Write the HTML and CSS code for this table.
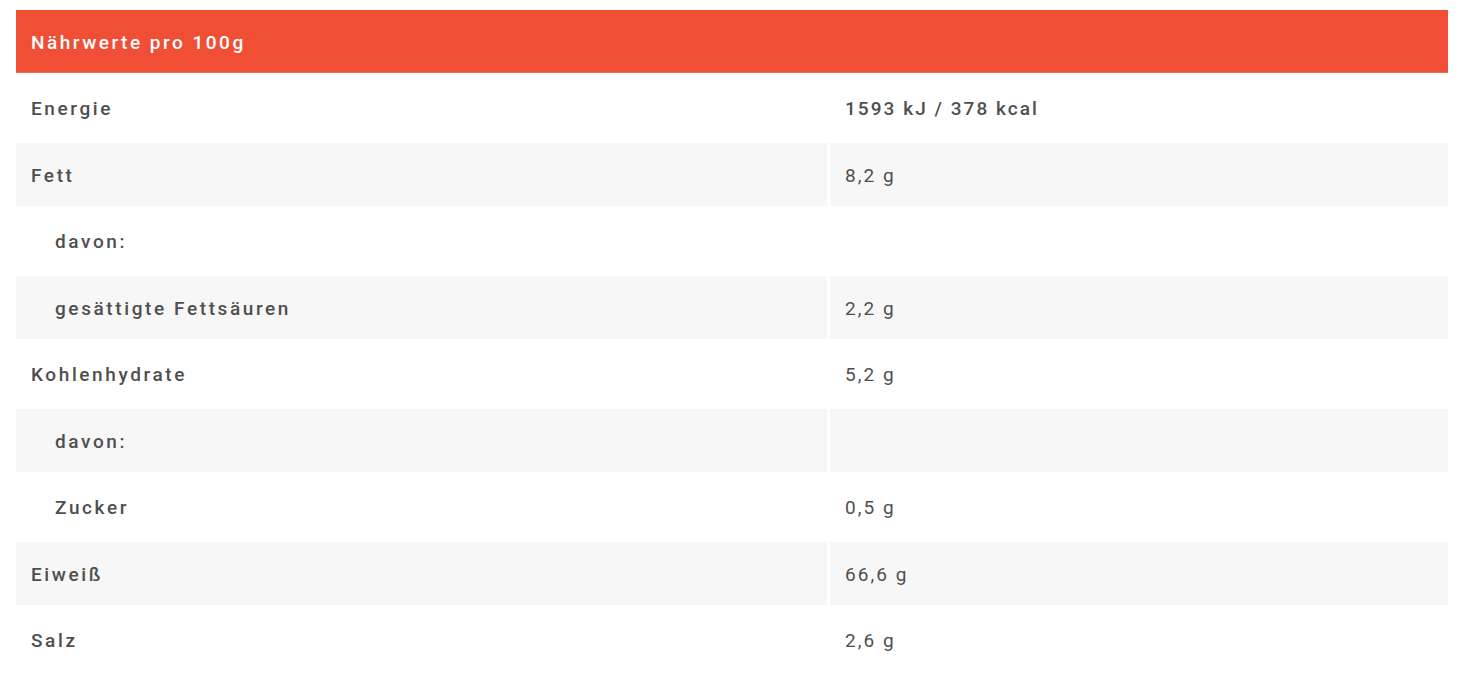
FILE: index.html
```html
<!DOCTYPE html>
<html lang="de">
<head>
<meta charset="utf-8">
<title>Nährwerte</title>
<link rel="stylesheet" href="styles.css">
</head>
<body>
<table class="nutrition">
  <colgroup>
    <col class="col-label">
    <col class="col-value">
  </colgroup>
  <thead>
    <tr><th colspan="2" class="head">Nährwerte pro 100g</th></tr>
  </thead>
  <tbody>
    <tr class="strong"><td>Energie</td><td>1593 kJ / 378 kcal</td></tr>
    <tr class="alt"><td>Fett</td><td>8,2 g</td></tr>
    <tr><td class="sub">davon:</td><td></td></tr>
    <tr class="alt"><td class="sub">gesättigte Fettsäuren</td><td>2,2 g</td></tr>
    <tr><td>Kohlenhydrate</td><td>5,2 g</td></tr>
    <tr class="alt"><td class="sub">davon:</td><td></td></tr>
    <tr><td class="sub">Zucker</td><td>0,5 g</td></tr>
    <tr class="alt"><td>Eiweiß</td><td>66,6 g</td></tr>
    <tr><td>Salz</td><td>2,6 g</td></tr>
  </tbody>
</table>
</body>
</html>
```
FILE: styles.css
```css
html, body {
  margin: 0;
  padding: 0;
  background: #ffffff;
}

body {
  font-family: Roboto, "Liberation Sans", sans-serif;
  color: #4f4f4f;
}

.nutrition {
  margin: 7px 0 0 13px;
  width: 1438px;
  table-layout: fixed;
  border-collapse: separate;
  border-spacing: 3px;
}

.col-label { width: 811px; }
.col-value { width: 618px; }

.nutrition th,
.nutrition td {
  height: 63.5px;
  padding: 2px 15px 0;
  box-sizing: border-box;
  text-align: left;
  vertical-align: middle;
  font-size: 19px;
  letter-spacing: 2.05px;
}

.nutrition .head {
  height: 63px;
  background: #f04f36;
  border-bottom: 1px solid #f46a55;
  color: #ffffff;
  font-weight: 500;
  letter-spacing: 2.5px;
}

.nutrition td:first-child {
  font-weight: 500;
  letter-spacing: 2.6px;
}

.nutrition td + td {
  font-weight: 400;
}

.nutrition .strong td {
  font-weight: 500;
}

.nutrition .alt td {
  background: #f7f7f7;
}

.nutrition td.sub {
  padding-left: 39px;
}
```
